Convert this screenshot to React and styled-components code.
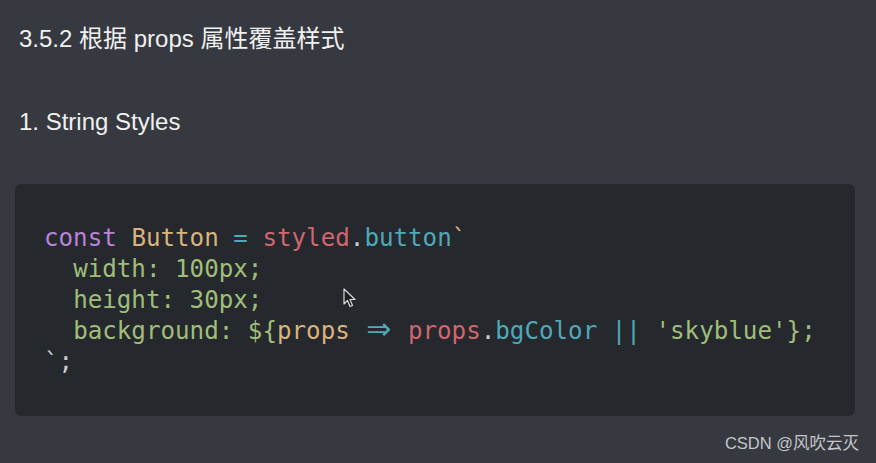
import styled, { createGlobalStyle } from 'styled-components';

const GlobalStyle = createGlobalStyle`
  html, body {
    margin: 0;
    padding: 0;
    background: #363940;
  }
`;

const Page = styled.div`
  position: relative;
  width: 876px;
  height: 463px;
  box-sizing: border-box;
  padding: 25px 21px 0 15px;
  background: #363940;
  overflow: hidden;
`;

const Heading = styled.div`
  margin: ${props => props.mt || '0'} 0 0 4px;
  font-family: "Liberation Sans", "Noto Sans CJK SC", sans-serif;
  font-size: 24px;
  line-height: 28px;
  color: #f0f0f0;
`;

const CodeBlock = styled.pre`
  position: relative;
  margin: 48px 0 0;
  padding: 39px 0 38px 29px;
  background: #25282d;
  border-radius: 6px;
  font-family: "DejaVu Sans Mono", "Liberation Mono", monospace;
  font-size: 24.2px;
  line-height: 31px;
  color: #c9ccd1;
`;

const Line = styled.div`
  height: 31px;
  white-space: pre;
`;

const Tok = styled.span`
  color: ${props => props.c};
`;

const Arrow = styled.span`
  display: inline-block;
  width: 29px;
  line-height: 0;
  text-align: center;
  font-family: "DejaVu Sans", sans-serif;
  font-size: 30px;
  color: #4fa9b8;
`;

const Cursor = styled.svg`
  position: absolute;
  left: 328px;
  top: 104px;
`;

const Watermark = styled.div`
  position: absolute;
  right: 17px;
  top: 430px;
  font-family: "Liberation Sans", "Noto Sans CJK SC", sans-serif;
  font-size: 16.5px;
  color: #c4c6ca;
`;

const purple = '#b983d8';
const yellow = '#dbb37c';
const cyan = '#4fa9b8';
const red = '#d0666f';
const green = '#a0be7a';
const plain = '#c9ccd1';

export default function App() {
  return (
    <Page>
      <GlobalStyle />
      <Heading>3.5.2 根据 props 属性覆盖样式</Heading>
      <Heading mt="55px">1. String Styles</Heading>
      <CodeBlock>
        <Line>
          <Tok c={purple}>const</Tok> <Tok c={yellow}>Button</Tok> <Tok c={cyan}>=</Tok>{' '}
          <Tok c={red}>styled</Tok><Tok c={plain}>.</Tok><Tok c={cyan}>button</Tok><Tok c={yellow}>`</Tok>
        </Line>
        <Line>{'  '}<Tok c={green}>width: 100px;</Tok></Line>
        <Line>{'  '}<Tok c={green}>height: 30px;</Tok></Line>
        <Line>
          {'  '}<Tok c={green}>background: ${'{'}</Tok><Tok c={yellow}>props</Tok> <Arrow>⇒</Arrow>{' '}
          <Tok c={red}>props</Tok><Tok c={plain}>.</Tok><Tok c={cyan}>bgColor</Tok> <Tok c={cyan}>||</Tok>{' '}
          <Tok c={green}>'skyblue'</Tok><Tok c={green}>{'}'};</Tok>
        </Line>
        <Line><Tok c={plain}>`;</Tok></Line>
        <Cursor width="14" height="20" viewBox="0 0 14 20">
          <path d="M1 1 L1 16 L4.5 12.5 L7 18.5 L9.5 17.5 L7 11.5 L12 11.5 Z" fill="#1b1d20" stroke="#d8d8d8" strokeWidth="1.2" strokeLinejoin="round" />
        </Cursor>
      </CodeBlock>
      <Watermark>CSDN @风吹云灭</Watermark>
    </Page>
  );
}
